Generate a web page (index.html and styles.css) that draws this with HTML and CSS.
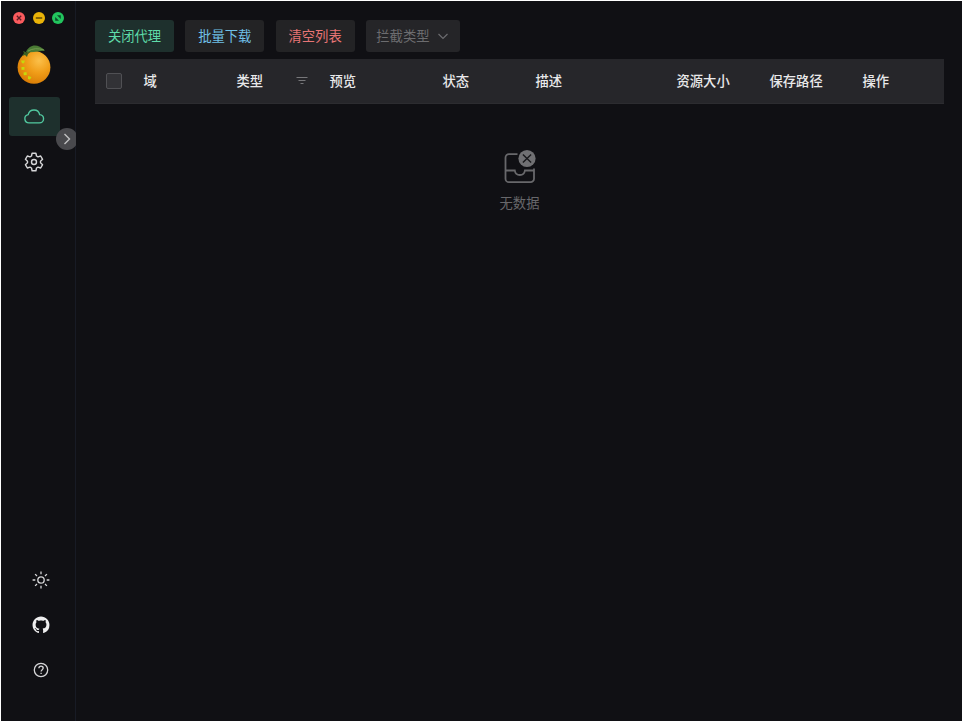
FILE: index.html
```html
<!DOCTYPE html>
<html lang="zh-CN">
<head>
<meta charset="utf-8">
<title>资源下载</title>
<link rel="stylesheet" href="styles.css">
</head>
<body>
<div class="app">
  <aside class="sidebar">
    <div class="lights">
      <svg viewBox="0 0 12 12"><circle cx="6" cy="6" r="6" fill="#fb5b5e"/><path d="M3.800 3.800l4.400 4.400M8.200 3.800L3.800 8.200" stroke="#5d1d25" stroke-width="1.300"/></svg>
      <svg viewBox="0 0 12 12"><circle cx="6" cy="6" r="6" fill="#eab308"/><path d="M2.800 6h6.400" stroke="#5b4508" stroke-width="1.400"/></svg>
      <svg viewBox="0 0 12 12"><circle cx="6" cy="6" r="6" fill="#22c55e"/><path d="M5 3.200h3.800V7zM3.200 5v3.800H7z" fill="#0c4a2a"/></svg>
    </div>
    <svg class="logo" viewBox="0 0 36 42">
      <defs>
        <radialGradient id="peel" cx=".65" cy=".3" r=".75"><stop offset="0" stop-color="#fbc04a"/><stop offset=".5" stop-color="#f09d18"/><stop offset="1" stop-color="#d97c05"/></radialGradient>
      </defs>
      <circle cx="18" cy="24.300" r="16.400" fill="url(#peel)"/>
      <path d="M10 9C13 2 21-.5 29 7.500C23 8.500 17 9.500 10 9z" fill="#4a7a34"/>
      <path d="M12 8Q19 4 28 7" stroke="#7fa658" stroke-width=".8" fill="none"/>
      <path d="M7 8l4 1.500 4-1-3 2.500-1 3-2-2-3 1 2-3z" fill="#3c5f23"/>
      <g fill="#c5d90c"><path d="M5 17.500h4l-1 2.800H6z"/><path d="M5.500 24h3v2.800h-3z"/><path d="M7.500 29.500l3-.5.3 3-3 .3z"/><path d="M12 33l3.500 1-1.500 2.500-2-.5z"/></g>
    </svg>
    <nav class="nav">
      <a class="nav-item active"><svg viewBox="0 0 24 22"><path d="M6.500 17.500a4.600 4.600 0 0 1-.9-9.100C6.400 5.100 9 3.300 12 3.300s5.600 1.900 6.200 5.100c2.500.2 4.300 2.100 4.300 4.500 0 2.600-2 4.600-4.600 4.600z" fill="none" stroke="#52c9a0" stroke-width="1.500"/></svg></a>
      <a class="nav-item"><svg class="gear" viewBox="0 0 24 24" fill="none" stroke="#d6d6d8" stroke-width="1.700" stroke-linejoin="round"><path d="M9.700 1.500h4.600l.7 3.300 1.800 1 3.200-1 2.300 4-2.500 2.200v2l2.500 2.200-2.300 4-3.200-1-1.800 1-.7 3.300H9.700L9 19.200l-1.800-1-3.200 1-2.300-4L4.200 13v-2L1.700 8.800l2.300-4 3.200 1 1.800-1z"/><circle cx="12" cy="12" r="3"/></svg></a>
    </nav>
    <div class="clip"><button class="toggle"><svg viewBox="0 0 12 12"><path d="M3.500 1l5 5-5 5" fill="none" stroke="#c0c0c2" stroke-width="1.400"/></svg></button></div>
    <div class="tools">
      <svg viewBox="0 0 18 18" fill="none" stroke="#d6d6d8" stroke-width="1.300"><circle cx="9" cy="9" r="3.200"/><path d="M9 .6v2.700M9 14.700v2.700M.6 9h2.700M14.700 9h2.700M3.100 3.100L5 5M13 13l1.900 1.900M3.100 14.900L5 13M13 5l1.900-1.900"/></svg>
      <svg viewBox="-.5 -.5 17 17"><path fill="#eeeeef" fill-rule="evenodd" d="M8 0C3.580 0 0 3.580 0 8c0 3.540 2.290 6.530 5.470 7.590.4.070.55-.17.55-.38 0-.19-.01-.82-.01-1.490-2.010.37-2.530-.49-2.690-.94-.09-.23-.48-.94-.82-1.130-.28-.15-.68-.52-.01-.53.63-.01 1.080.58 1.230.82.720 1.210 1.870.87 2.330.66.070-.52.280-.87.510-1.070-1.780-.2-3.640-.89-3.640-3.950 0-.87.310-1.590.82-2.150-.08-.2-.36-1.020.08-2.120 0 0 .67-.21 2.200.82.640-.18 1.320-.27 2-.27s1.360.09 2 .27c1.530-1.040 2.200-.82 2.200-.82.440 1.100.16 1.920.08 2.120.51.560.82 1.270.82 2.150 0 3.070-1.870 3.750-3.650 3.950.29.25.54.73.54 1.480 0 1.070-.01 1.930-.01 2.200 0 .21.150.46.550.38A8.010 8.010 0 0 0 16 8c0-4.420-3.580-8-8-8z"/></svg>
      <svg viewBox="0 0 18 18" fill="none" stroke="#d6d6d8" stroke-width="1.300"><circle cx="9" cy="9" r="6.700"/><path d="M6.900 7.300C6.900 4.400 11.200 4.500 11.200 7.100 11.200 8.700 9.100 8.700 9.100 10.600M9.100 11.700v1.300"/></svg>
    </div>
  </aside>
  <main class="content">
    <div class="actions">
      <button class="btn primary">关闭代理</button>
      <button class="btn info">批量下载</button>
      <button class="btn danger">清空列表</button>
      <button class="btn select">拦截类型<svg viewBox="0 0 12 12"><path d="M1.500 4L6 8.500 10.500 4" fill="none" stroke="#6c6c6f" stroke-width="1.200"/></svg></button>
    </div>
    <div class="thead">
      <span class="check"></span>
      <span>域</span>
      <span class="type">类型<svg viewBox="0 0 12 10"><path d="M.5 1.500h11M2.500 4.500h7M4.500 7.500h3" stroke="#77777a"/></svg></span>
      <span>预览</span>
      <span>状态</span>
      <span>描述</span>
      <span>资源大小</span>
      <span>保存路径</span>
      <span>操作</span>
    </div>
    <div class="empty">
      <svg viewBox="0 0 34 36" fill="none" stroke="#68686b" stroke-width="1.800"><path d="M14.500 5.200H6a3.500 3.500 0 0 0-3.500 3.500v21A3.500 3.500 0 0 0 6 33.200h21.500a3.500 3.500 0 0 0 3.500-3.500V19.500M2.500 21.500h9.300c.8 6 9.300 6 10.100 0H31"/><circle cx="24" cy="9.500" r="8.600" fill="#707073" stroke="none"/><path d="M19.900 5.400l8.200 8.200M28.100 5.400l-8.200 8.200" stroke="#19191c" stroke-width="1.400"/></svg>
      <p>无数据</p>
    </div>
  </main>
</div>
</body>
</html>
```
FILE: styles.css
```css
* { box-sizing: border-box; }
body { margin: 0; background: #101014; color: #e6e6e7; font: 13.3px/20px "Noto Sans CJK SC", sans-serif; }
svg { display: block; flex: none; }
.app { display: flex; height: 721px; border: 1px solid #fff; border-width: 1px 0 0 1px; overflow: hidden; }
.sidebar { width: 75px; border-right: 1px solid #181b25; display: flex; flex-direction: column; position: relative; flex: none; }
.lights { display: flex; gap: 7.700px; padding: 11px 0 0 12px; }
.lights svg { width: 12px; height: 12px; }
.logo { width: 36px; height: 42px; margin: 19px 0 0 14.500px; }
.nav { margin-top: 12px; padding-left: 7.500px; display: flex; flex-direction: column; gap: 6px; }
.nav-item { width: 51px; height: 39px; border-radius: 3px; display: flex; align-items: center; justify-content: center; }
.nav-item svg { width: 22px; height: 20px; }
.nav-item .gear { width: 20px; height: 20px; }
.active { background: #1e302d; }
.clip { position: absolute; top: 127px; right: -1px; width: 20px; height: 23px; overflow: hidden; }
.toggle { width: 22px; height: 22px; padding: 0; border: 0; border-radius: 50%; background: #49494d; display: flex; align-items: center; justify-content: center; }
.toggle svg { width: 12px; height: 12px; }
.tools { margin-top: auto; padding: 0 0 42px 31px; display: flex; flex-direction: column; gap: 27px; }
.tools svg { width: 18px; height: 18px; }
.content { flex: 1; padding: 19px 18px 0 19px; }
.actions { display: flex; gap: 11.300px; height: 32px; }
.btn { width: 79px; height: 32px; padding: 0 0 1px; border: 0; border-radius: 3px; background: #232325; font: inherit; display: flex; align-items: center; justify-content: center; white-space: nowrap; }
.primary { background: #1e302d; color: #5fdba9; }
.info { color: #70c0e8; }
.danger { color: #e87575; }
.select { width: 94px; background: #252528; color: #6c6c6f; gap: 8px; }
.select svg { width: 12px; height: 12px; }
.thead { margin-top: 7px; height: 45px; background: #26262a; border-bottom: 1px solid #2c2c30; display: grid; grid-template-columns: 37.500px 93px 93px 113px 93px 141px 93px 93px 1fr; align-items: center; padding-left: 11px; color: #e9e9ea; font-weight: 500; }
.check { width: 16px; height: 16px; border: 1px solid #505054; border-radius: 2px; background: #323236; }
.type { display: flex; align-items: center; gap: 33px; }
.type svg { width: 12px; height: 10px; }
.empty { display: flex; flex-direction: column; align-items: center; margin-top: 45px; color: #68686b; }
.empty svg { width: 34px; height: 36px; }
.empty p { margin: 8px 0 0; }
```
